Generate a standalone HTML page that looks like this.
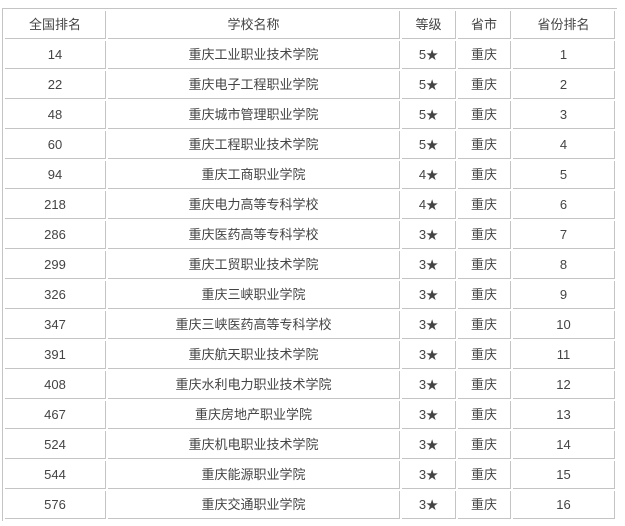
<!DOCTYPE html>
<html><head><meta charset="utf-8"><style>
html,body{margin:0;padding:0;background:#fff;width:625px;height:526px;overflow:hidden}
table{position:absolute;left:2px;top:8px;border-top:1px solid #c4c4c4;border-left:1px solid #c4c4c4;border-spacing:2px;border-collapse:separate;table-layout:fixed;width:615px}
td{border-right:1px solid #c4c4c4;border-bottom:1px solid #c4c4c4;padding:0;text-align:center;font-family:"Liberation Sans","Noto Sans CJK SC",sans-serif;font-size:13px;color:#444;box-sizing:border-box;height:28px;line-height:27px;overflow:hidden}
s{text-decoration:none;font-family:"Noto Sans CJK SC",sans-serif;font-size:12px;line-height:0}
</style></head><body>
<table>
<colgroup><col style="width:101px"><col style="width:292px"><col style="width:54px"><col style="width:53px"><col style="width:102px"></colgroup>
<tr><td>全国排名</td><td>学校名称</td><td>等级</td><td>省市</td><td>省份排名</td></tr>
<tr><td>14</td><td>重庆工业职业技术学院</td><td>5<s>★</s></td><td>重庆</td><td>1</td></tr>
<tr><td>22</td><td>重庆电子工程职业学院</td><td>5<s>★</s></td><td>重庆</td><td>2</td></tr>
<tr><td>48</td><td>重庆城市管理职业学院</td><td>5<s>★</s></td><td>重庆</td><td>3</td></tr>
<tr><td>60</td><td>重庆工程职业技术学院</td><td>5<s>★</s></td><td>重庆</td><td>4</td></tr>
<tr><td>94</td><td>重庆工商职业学院</td><td>4<s>★</s></td><td>重庆</td><td>5</td></tr>
<tr><td>218</td><td>重庆电力高等专科学校</td><td>4<s>★</s></td><td>重庆</td><td>6</td></tr>
<tr><td>286</td><td>重庆医药高等专科学校</td><td>3<s>★</s></td><td>重庆</td><td>7</td></tr>
<tr><td>299</td><td>重庆工贸职业技术学院</td><td>3<s>★</s></td><td>重庆</td><td>8</td></tr>
<tr><td>326</td><td>重庆三峡职业学院</td><td>3<s>★</s></td><td>重庆</td><td>9</td></tr>
<tr><td>347</td><td>重庆三峡医药高等专科学校</td><td>3<s>★</s></td><td>重庆</td><td>10</td></tr>
<tr><td>391</td><td>重庆航天职业技术学院</td><td>3<s>★</s></td><td>重庆</td><td>11</td></tr>
<tr><td>408</td><td>重庆水利电力职业技术学院</td><td>3<s>★</s></td><td>重庆</td><td>12</td></tr>
<tr><td>467</td><td>重庆房地产职业学院</td><td>3<s>★</s></td><td>重庆</td><td>13</td></tr>
<tr><td>524</td><td>重庆机电职业技术学院</td><td>3<s>★</s></td><td>重庆</td><td>14</td></tr>
<tr><td>544</td><td>重庆能源职业学院</td><td>3<s>★</s></td><td>重庆</td><td>15</td></tr>
<tr><td>576</td><td>重庆交通职业学院</td><td>3<s>★</s></td><td>重庆</td><td>16</td></tr>
</table>
</body></html>
